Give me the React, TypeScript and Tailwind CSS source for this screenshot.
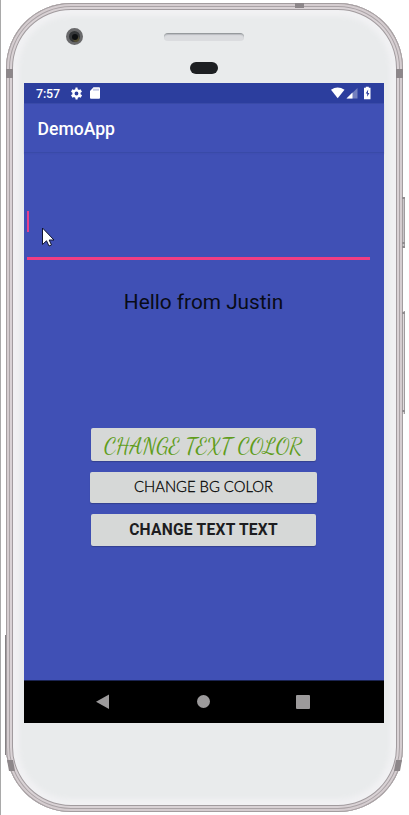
import type { ReactNode } from 'react';

function StatusBar() {
  return (
    <div className="flex h-5 items-center justify-between bg-[#2c3e9e] pl-3 pr-3 text-white">
      <div className="flex items-center">
        <span className="w-[34px] pt-px text-[12.500px] leading-5 font-medium tracking-[-0.15px]">7:57</span>
        <svg width="13" height="13" viewBox="0 0 24 24" fill="white">
          <path fillRule="evenodd" d="M19.500 13.300a8 8 0 0 0 0-2.600l2.600-2-2.600-4.500-3 1.200a8 8 0 0 0-2.300-1.300L13.800 1h-3.600l-.5 3.100a8 8 0 0 0-2.300 1.300l-3-1.200L1.900 8.700l2.600 2a8 8 0 0 0 0 2.600l-2.600 2 2.600 4.500 3-1.200a8 8 0 0 0 2.300 1.300l.5 3.100h3.600l.5-3.100a8 8 0 0 0 2.300-1.300l3 1.200 2.600-4.500zM12 15.500a3.500 3.500 0 1 1 0-7 3.500 3.500 0 0 1 0 7z" />
        </svg>
        <svg className="ml-[7px]" width="10" height="12" viewBox="0 0 10 12">
          <path d="M3.500.3H9q1 0 1 1v9.400q0 1-1 1H1q-1 0-1-1V4z" fill="white" />
          <path d="M3.500 1.700h1v2h-1zm2 0h1v2h-1zm2 0h1v2h-1z" fill="#8d98cc" />
        </svg>
      </div>
      <svg width="42" height="14" viewBox="0 0 42 14">
        <path d="M1 3.700Q7.500-.5 14.500 3.700L7.700 12.200z" fill="white" />
        <path d="M27.500 2v10.500h-11z" fill="#7480bf" />
        <path d="M22.500 6.500v6h-6z" fill="white" />
        <path d="M34 1.700h1.800V.7h3v1h1.700v11.500H34V1.700z" fill="white" />
        <path d="m38.200 3.500-2.500 4h1.500v3.200L39.400 7h-1.500z" fill="#2c3e9e" />
      </svg>
    </div>
  );
}

function RaisedButton({ className, children }: { className: string; children: ReactNode }) {
  return (
    <button className={`flex items-center justify-center rounded-[2px] bg-[#d6d8d7] shadow-[0_1px_1px_#00000035] ${className}`}>
      {children}
    </button>
  );
}

function Buttons() {
  return (
    <div className="flex flex-col items-center gap-[11px] pr-px">
      <RaisedButton className="h-[33px] w-[225px]">
        <svg width="215" height="33" viewBox="0 0 215 33">
          <text x="8" y="25" textLength="198" lengthAdjust="spacingAndGlyphs" fill="#609d1b" className="font-['Dancing_Script',cursive] text-[23px]">CHANGE TEXT COLOR</text>
        </svg>
      </RaisedButton>
      <RaisedButton className="h-[31px] w-[227px]">
        <svg width="211" height="31" viewBox="0 0 211 31">
          <text x="36" y="20" textLength="139" lengthAdjust="spacingAndGlyphs" fill="#000000" className="font-['Coming_Soon','Lato',sans-serif] text-[16.500px] font-light" stroke="#000000" strokeWidth="0.3">CHANGE BG COLOR</text>
        </svg>
      </RaisedButton>
      <RaisedButton className="h-[32px] w-[225px]">
        <span className="pt-px text-[15.600px] leading-none font-bold tracking-[0.25px] text-[#1d1d1f]">CHANGE TEXT TEXT</span>
      </RaisedButton>
    </div>
  );
}

function NavigationBar() {
  return (
    <div className="flex h-[43px] items-center gap-[86px] border-t border-[#1b2452] bg-black pb-px pl-[72px]">
      <svg width="15" height="16" viewBox="0 0 15 16"><path d="M0 7.700 13 .5v14.500z" fill="#9c9a9b" /></svg>
      <div className="size-[13px] rounded-full bg-[#9c9a9b]" />
      <div className="size-[14px] rounded-[1px] bg-[#9c9a9b]" />
    </div>
  );
}

function Screen() {
  return (
    <div className="flex h-[640px] w-[360px] flex-col bg-[#4050b5]">
      <StatusBar />
      <div className="flex h-[50px] items-center border-b border-[#394aa8] pl-[13.500px] pt-[3px] text-[17.600px] font-medium text-white shadow-[0_1px_1px_#394aa850,inset_0_1px_0_#394aa8]">
        DemoApp
      </div>
      <div className="flex grow flex-col pt-[58px]">
        <div className="ml-[3px] flex h-[49px] w-[343px] items-start border-b-[3px] border-[#f03d82]">
          <div className="h-[21px] w-[2px] bg-[#e8408c]" />
          <svg className="mt-[15px] ml-3" width="14" height="22" viewBox="0 0 14 22">
            <path d="M1.500 2v16.500l4-3.700 2.500 5.200 2.500-1-2.300-5H13z" fill="white" stroke="#101430" strokeWidth="1" />
          </svg>
        </div>
        <p className="pt-7 pr-px text-center text-[20.800px] leading-7 text-[#080b17]">Hello from Justin</p>
        <div className="pt-28"><Buttons /></div>
      </div>
      <NavigationBar />
    </div>
  );
}

// Antenna bands and the side keys, drawn over the metal rim.
function Hardware() {
  return (
    <svg className="pointer-events-none absolute inset-0" width="408" height="815" viewBox="1 0 408 815">
      <path d="M6 69h7v9H6zM396 69h7v9h-7zM295 3h9v5h-9zM7 760h6l2 11H9zM402 760h-6l-2 11h6z" fill="#8d878a" />
      <path d="M403 197h2v51h-2z" fill="#c9c6ca" />
      <path d="M403 311h2v103h-2z" fill="#e0dcde" />
      <path d="M404.500 197v51M404.500 311v103" stroke="#a09c9f" />
      <path d="M402 198h3M402 243h3M402 247h3M402 313h3M402 411h3" stroke="#918d90" strokeWidth="2" />
      <path d="M5.500 635v120" stroke="#858184" />
    </svg>
  );
}

function Earpiece() {
  return (
    <header className="flex h-20 shrink-0 px-[60px]">
      <div className="mt-[25px] flex size-[17px] items-center justify-center rounded-full border-[3px] border-[#69696b] bg-[#343638]">
        <div className="size-[6px] rounded-full bg-[#0e1012] shadow-[1px_2px_1px_#575134]" />
      </div>
      <div className="ml-[81px] flex flex-col items-center gap-[21px] pt-[30px]">
        <div className="h-[8px] w-[80px] rounded-[4px] border-t border-[#969a9d] bg-[#dbdcdf] shadow-[inset_0_1px_1px_#b8babf]" />
        <div className="h-3 w-7 rounded-full bg-[#1d1f22]" />
      </div>
    </header>
  );
}

export default function App() {
  return (
    <main className="relative h-[815px] w-[409px] overflow-hidden border-l border-[#a9a9a9] bg-white pl-[5px] pt-[3px] font-['Roboto',sans-serif]">
      <div className="flex h-[809px] w-[397px] flex-col rounded-[65px] bg-[#e9ebec] shadow-[inset_0_0_0_1px_#a39d9f,inset_0_0_0_3px_#d5cdd0,inset_0_0_0_4px_#aaa3a6,inset_0_0_0_6px_#d9d2d5,inset_0_0_0_7px_#a19b9e,inset_0_0_5px_13px_#f1f1f3]">
        <Earpiece />
        <div className="flex justify-center pr-px"><Screen /></div>
      </div>
      <Hardware />
    </main>
  );
}
